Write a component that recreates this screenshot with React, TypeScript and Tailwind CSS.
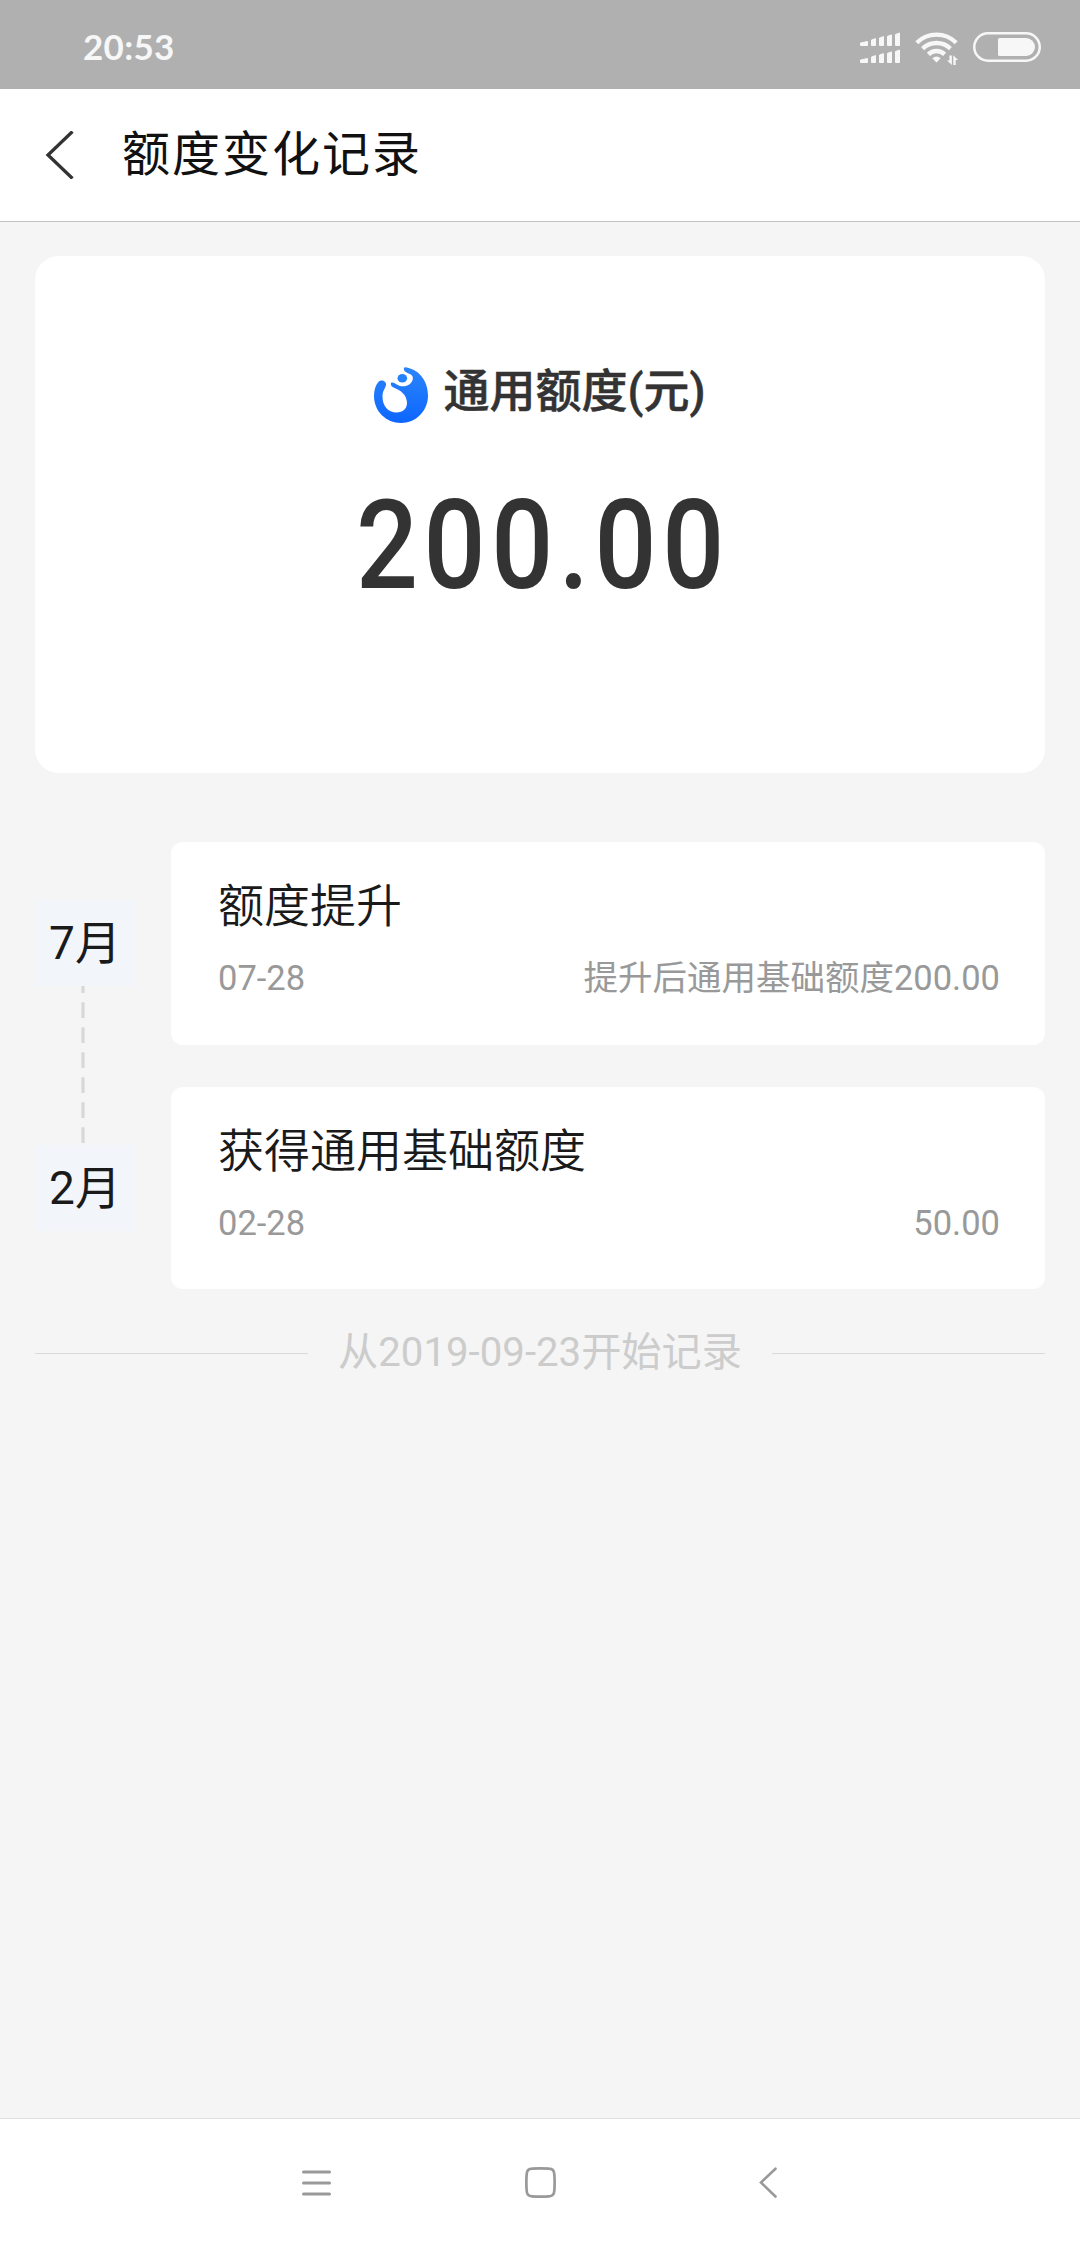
const records = [
  { month: "7月", title: "额度提升", date: "07-28", detail: "提升后通用基础额度200.00" },
  { month: "2月", title: "获得通用基础额度", date: "02-28", detail: "50.00" },
];

const SignalIcon = () => (
  <svg width="42" height="32" viewBox="0 0 42 32" fill="#f7f7f7" stroke="#f7f7f7" strokeWidth="1" strokeLinejoin="round">
    <path d="M1.5 11 8.5 9.5v4h-7zM12.5 8l4-1.4v6.9h-4zM20.5 6l4-1.4v8.9h-4zM28.5 4.3l4-1.4v10.6h-4zM36.5 2.5l4-1.5v12.5h-4z" />
    <path d="M1.5 28 8.5 26.5v4h-7zM12.5 25l4-1.4v6.9h-4zM20.5 23l4-1.4v8.9h-4zM28.5 21.3l4-1.4v10.6h-4zM36.5 19.5l4-1.5v12.5h-4z" />
  </svg>
);

const WifiIcon = () => (
  <svg width="44" height="34" viewBox="0 0 44 34" fill="none" stroke="#f7f7f7" strokeWidth="4.4">
    <path d="M1.8 10.7a28 28 0 0 1 39.4 0" />
    <path d="M7.6 16.6a20 20 0 0 1 27.8 0" />
    <path d="M13.4 22.4a11.5 11.5 0 0 1 16.2 0" />
    <path d="M21.5 30.5l-4.2-4.2a6.5 6.5 0 0 1 8.4 0z" fill="#f7f7f7" stroke="none" />
    <path d="M36.9 23.5v9.5l-4.9-4.5h2.4v-5zM38.3 33v-9.7l4.7 4.7h-2.3v5z" fill="#f7f7f7" stroke="none" />
  </svg>
);

const BatteryIcon = () => (
  <svg width="68" height="30" viewBox="0 0 68 30" fill="none">
    <rect x="1.25" y="1.25" width="65.5" height="27.5" rx="13.75" stroke="#f7f7f7" strokeWidth="2.5" />
    <path d="M26.5 6H53a9 9 0 0 1 0 18H26.5a1.5 1.5 0 0 1-1.5-1.5v-15A1.5 1.5 0 0 1 26.5 6z" fill="#f7f7f7" />
  </svg>
);

const QuotaLogo = () => (
  <svg width="54" height="56" viewBox="0 0 54 56">
    <defs>
      <linearGradient id="quota" x1="0" y1="0" x2="0" y2="1">
        <stop offset="0" stopColor="#2b85fa" />
        <stop offset="1" stopColor="#0d66ff" />
      </linearGradient>
    </defs>
    <path
      d="M30.5 0.3C44 1.5 54 13 54 28.5 54 44 42 56 27 56S0 44 0 29C0 23.5 1.5 18.5 4 15.5c2.5-3.5 8.5-1.8 8 2.5-.4 3-3.5 5.5-3.5 11.500 0 9.500 5.500 16 14 16 6.500 0 10.500-4 10.500-9.500 0-8-6-12.500-13.500-15.500-2.800-1.200-3.200-3.500-2.300-5 2.300-.5 4 .8 6 2.200 6.500 3.600 14 .8 15.500-5.200 1-4-2-5.600-5.200-6.600C30 4.800 29 2 30.500.3z"
      fill="url(#quota)"
    />
    <ellipse cx="28.3" cy="11.3" rx="4.8" ry="4.3" fill="#2482fb" />
  </svg>
);

const StatusBar = () => (
  <div className="flex h-[89px] items-center justify-between bg-[#b0b0b0] pt-1.5 pr-[39px] pl-[83px]">
    <span className="pb-[3px] font-['Lato','Roboto',sans-serif] text-[35px] leading-10 font-bold tracking-[0.3px] text-[#f7f7f7]">
      20:53
    </span>
    <div className="flex items-center">
      <SignalIcon />
      <div className="ml-[14px] pt-0.5">
        <WifiIcon />
      </div>
      <div className="ml-[14px] pb-px">
        <BatteryIcon />
      </div>
    </div>
  </div>
);

const Header = () => (
  <header className="flex h-[133px] items-center border-b border-[#c4c4c4] bg-white pl-[45px]">
    <svg width="30" height="48" viewBox="0 0 30 48" fill="none" stroke="#333" strokeWidth="3.3">
      <path d="M27.5 0.5 3 24l24.5 23.5" />
    </svg>
    <h1 className="ml-[47px] text-[48px] leading-[60px] tracking-[2px] text-[#111]">额度变化记录</h1>
  </header>
);

const QuotaCard = () => (
  <section className="flex h-[517px] flex-col items-center rounded-[24px] bg-white pt-[103px]">
    <div className="flex items-center">
      <div className="pt-2">
        <QuotaLogo />
      </div>
      <h2 className="ml-[15px] text-[46px] leading-[60px] font-medium text-[#333] [-webkit-text-stroke:0.5px_#333]">
        通用额度(元)
      </h2>
    </div>
    <p className="mt-[58px] scale-x-[0.88] pl-[7px] text-[124px] leading-[130px] font-medium tracking-[6.3px] text-[#333]">
      200.00
    </p>
  </section>
);

const Timeline = () => (
  <section className="mt-[69.4px] flex flex-col gap-[42.6px]">
    {records.map((record, index) => (
      <div key={record.date} className="flex h-[202.2px] items-center gap-9">
        <div className="relative flex h-[86px] w-[100px] items-center justify-center bg-[#f2f5fa] text-[46px] text-[#1a1a1a]">
          {record.month}
          {index < records.length - 1 && (
            <svg className="absolute top-full left-[46px]" width="4" height="159" viewBox="0 0 4 159">
              <path d="M2 0v157" stroke="#d7d9d9" strokeWidth="3.3" strokeDasharray="15.7 9.3" strokeDashoffset="8.7" />
            </svg>
          )}
        </div>
        <div className="h-full flex-1 rounded-xl bg-white pt-[34px] pr-[45px] pl-[47px]">
          <h3 className="text-[46px] leading-[60px] font-[350] text-[#1a1a1a]">{record.title}</h3>
          <div className="mt-[17px] flex justify-between text-[34.5px] leading-[50px] text-[#999]">
            <span>{record.date}</span>
            <span>{record.detail}</span>
          </div>
        </div>
      </div>
    ))}
  </section>
);

const NavBar = () => (
  <nav className="flex h-[130px] items-center border-t border-[#dfdfdf] bg-white pb-0.5 pl-[302px]">
    <svg width="29" height="26" viewBox="0 0 29 26" stroke="#999" strokeWidth="3" strokeLinecap="round">
      <path d="M1.5 2h26M1.5 13h26M1.5 24h26" />
    </svg>
    <svg className="ml-[194px]" width="31" height="31" viewBox="0 0 31 31" fill="none" stroke="#999" strokeWidth="2.7">
      <path d="M7 1.7Q15.5 1 24 1.7 29 2 29.3 7 30 15.5 29.3 24 29 29 24 29.3 15.5 30 7 29.3 2 29 1.7 24 1 15.5 1.7 7 2 2 7 1.7z" />
    </svg>
    <svg className="ml-[203px]" width="19" height="31" viewBox="0 0 19 31" fill="none" stroke="#999" strokeWidth="2.6" strokeLinecap="round">
      <path d="M16.5 1.7 2 15.5l14.5 14" />
    </svg>
  </nav>
);

export default function App() {
  return (
    <div className="flex h-[2248px] w-[1080px] flex-col bg-[#f5f5f5] font-['Roboto','Noto_Sans_CJK_SC',sans-serif]">
      <StatusBar />
      <Header />
      <main className="flex-1 px-[35px] pt-[34px]">
        <QuotaCard />
        <Timeline />
        <div className="mt-[34px] flex items-center gap-[30px]">
          <div className="h-px flex-1 bg-[#d8dbdc]" />
          <span className="text-[40.2px] leading-[60px] text-[#ccc]">从2019-09-23开始记录</span>
          <div className="h-px flex-1 bg-[#d8dbdc]" />
        </div>
      </main>
      <NavBar />
    </div>
  );
}
